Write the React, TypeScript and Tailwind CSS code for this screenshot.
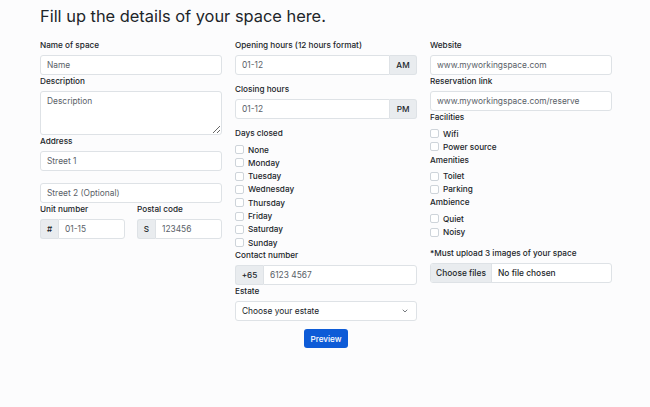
import { ChevronDown } from 'lucide-react'

const label = 'block text-[8.2px] leading-[13px] font-medium text-[#212529]'
const inputCls =
  'block w-full h-[20px] rounded-[3px] border border-[#dee2e6] bg-white px-[6px] text-[8.4px] text-[#212529] placeholder:text-[#5a6168] outline-none'
const addon =
  'flex items-center justify-center h-[20px] border border-[#dee2e6] bg-[#e9ecef] text-[8.2px] font-medium text-[#212529]'

function Check({ text }: { text: string }) {
  return (
    <label className="flex items-center h-[13.3px] text-[8.2px] font-medium text-[#212529]">
      <span className="w-[9px] h-[9px] rounded-[2px] border border-[#ced4da] bg-white mr-[4px]" />
      {text}
    </label>
  )
}

function App() {
  return (
    <div className="w-full h-[407px] bg-[#fcfcfd] font-['Inter','Liberation_Sans',sans-serif] pl-[40px] pt-[5px] text-[#212529]">
      <h1 className="text-[16.4px] leading-[22px] font-normal mb-[12px]">Fill up the details of your space here.</h1>

      <div className="grid grid-cols-[182px_182px_182px] gap-x-[13px] items-start">
        {/* column 1 */}
        <div>
          <span className={label}>Name of space</span>
          <input className={inputCls + ' mt-[3px]'} placeholder="Name" />
          <span className={label}>Description</span>
          <textarea
            className="block w-full h-[44px] mt-[3px] rounded-[3px] border border-[#dee2e6] bg-white px-[6px] py-[3px] text-[8.4px] placeholder:text-[#5a6168] outline-none resize-y"
            placeholder="Description"
          />
          <span className={label}>Address</span>
          <input className={inputCls + ' mt-[3px]'} placeholder="Street 1" />
          <input className={inputCls + ' mt-[12px]'} placeholder="Street 2 (Optional)" />
          <div className="grid grid-cols-2 gap-x-[12px]">
            <div>
              <span className={label}>Unit number</span>
              <div className="flex mt-[3px]">
                <span className={addon + ' w-[18px] rounded-l-[3px] border-r-0'}>#</span>
                <input className={inputCls + ' rounded-l-none flex-1 min-w-0'} placeholder="01-15" />
              </div>
            </div>
            <div>
              <span className={label}>Postal code</span>
              <div className="flex mt-[3px]">
                <span className={addon + ' w-[18px] rounded-l-[3px] border-r-0'}>S</span>
                <input className={inputCls + ' rounded-l-none flex-1 min-w-0'} placeholder="123456" />
              </div>
            </div>
          </div>
        </div>

        {/* column 2 */}
        <div className="flex flex-col">
          <span className={label}>Opening hours (12 hours format)</span>
          <div className="flex mt-[3px]">
            <input className={inputCls + ' rounded-r-none flex-1 min-w-0'} placeholder="01-12" />
            <span className={addon + ' w-[27px] rounded-r-[3px] border-l-0'}>AM</span>
          </div>
          <span className={label + ' mt-[8px]'}>Closing hours</span>
          <div className="flex mt-[3px]">
            <input className={inputCls + ' rounded-r-none flex-1 min-w-0'} placeholder="01-12" />
            <span className={addon + ' w-[27px] rounded-r-[3px] border-l-0'}>PM</span>
          </div>
          <span className={label + ' mt-[8px]'}>Days closed</span>
          <div className="mt-[3px]">
            {['None', 'Monday', 'Tuesday', 'Wednesday', 'Thursday', 'Friday', 'Saturday', 'Sunday'].map((d) => (
              <Check key={d} text={d} />
            ))}
          </div>
          <span className={label}>Contact number</span>
          <div className="flex mt-[3px]">
            <span className={addon + ' w-[28px] rounded-l-[3px] border-r-0'}>+65</span>
            <input className={inputCls + ' rounded-l-none flex-1 min-w-0'} placeholder="6123 4567" />
          </div>
          <span className={label}>Estate</span>
          <div className="flex items-center justify-between h-[20px] mt-[3px] rounded-[3px] border border-[#dee2e6] bg-white pl-[6px] pr-[7px] text-[8.4px]">
            <span>Choose your estate</span>
            <ChevronDown size={8} strokeWidth={2} className="text-[#343a40]" />
          </div>
          <button className="self-center mt-[8px] h-[19px] w-[44px] rounded-[3px] bg-[#0d5bd7] text-white text-[8.2px] font-medium">
            Preview
          </button>
        </div>

        {/* column 3 */}
        <div>
          <span className={label}>Website</span>
          <input className={inputCls + ' mt-[3px]'} placeholder="www.myworkingspace.com" />
          <span className={label}>Reservation link</span>
          <input className={inputCls + ' mt-[3px]'} placeholder="www.myworkingspace.com/reserve" />
          <span className={label}>Facilities</span>
          <div className="mt-[3px]">
            <Check text="Wifi" />
            <Check text="Power source" />
          </div>
          <span className={label}>Amenities</span>
          <div className="mt-[3px]">
            <Check text="Toilet" />
            <Check text="Parking" />
          </div>
          <span className={label}>Ambience</span>
          <div className="mt-[3px]">
            <Check text="Quiet" />
            <Check text="Noisy" />
          </div>
          <span className={label + ' mt-[8px]'}>*Must upload 3 images of your space</span>
          <div className="flex h-[20px] mt-[3.5px] rounded-[3px] border border-[#dee2e6] bg-white overflow-hidden text-[8.4px] font-medium">
            <span className="flex items-center justify-center w-[61px] bg-[#e9ecef] border-r border-[#dee2e6]">Choose files</span>
            <span className="flex items-center pl-[6px]">No file chosen</span>
          </div>
        </div>
      </div>
    </div>
  )
}

export default App
